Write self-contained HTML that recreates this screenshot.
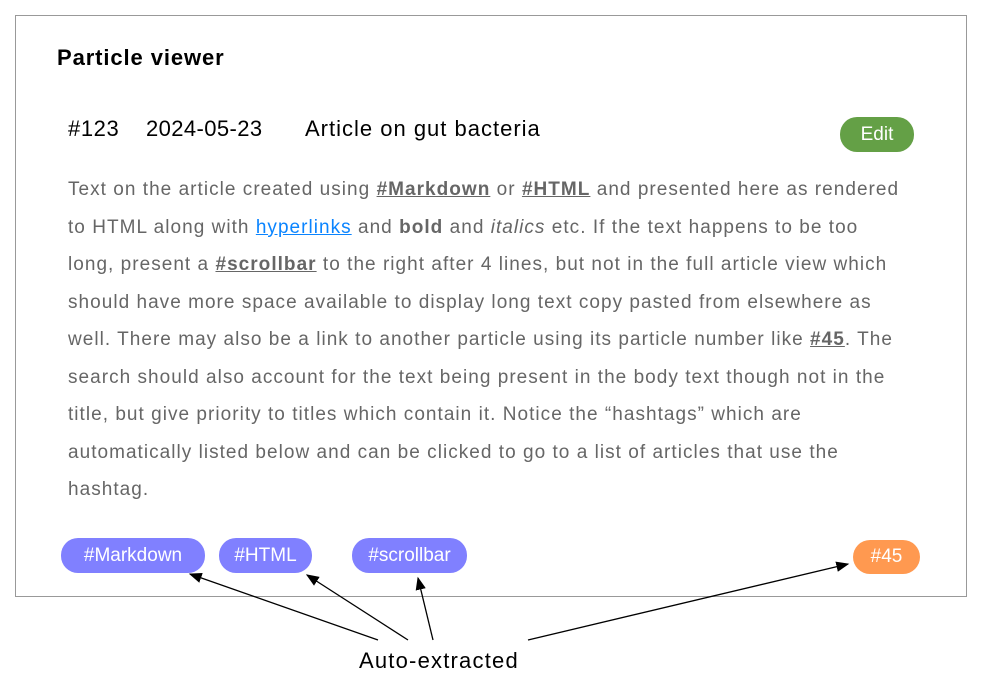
<!DOCTYPE html>
<html><head><meta charset="utf-8"><style>
body{margin:0;width:982px;height:699px;background:#fff;position:relative;font-family:"Liberation Sans",sans-serif;overflow:hidden}
.box{position:absolute;left:15px;top:15px;width:950px;height:580px;border:1px solid #999}
.t{position:absolute;white-space:nowrap}
.ln{position:absolute;left:68px;white-space:nowrap;font-size:19px;color:#666;letter-spacing:1.03px}
.ln b{color:#666}
.u{text-decoration:underline;font-weight:bold}
.pill{position:absolute;color:#fff;font-size:19px;border-radius:17px;display:flex;align-items:center;justify-content:center}
</style></head><body>
<div class="box"></div>
<div class="t" style="left:57px;top:45px;font-size:22px;font-weight:bold;letter-spacing:0.9px">Particle viewer</div>
<div class="t" style="left:68px;top:116px;font-size:22px;letter-spacing:0.6px">#123</div>
<div class="t" style="left:146px;top:116px;font-size:22px;letter-spacing:0.4px">2024-05-23</div>
<div class="t" style="left:305px;top:116px;font-size:22px;letter-spacing:1px">Article on gut bacteria</div>
<div class="pill" style="left:840px;top:117px;width:74px;height:35px;background:#64a046">Edit</div>
<div class="ln" style="top:179px">Text on the article created using <span class="u">#Markdown</span> or <span class="u">#HTML</span> and presented here as rendered</div>
<div class="ln" style="top:217px">to HTML along with <span style="color:#0a84ff;text-decoration:underline">hyperlinks</span> and <b>bold</b> and <i>italics</i> etc. If the text happens to be too</div>
<div class="ln" style="top:254px">long, present a <span class="u">#scrollbar</span> to the right after 4 lines, but not in the full article view which</div>
<div class="ln" style="top:292px">should have more space available to display long text copy pasted from elsewhere as</div>
<div class="ln" style="top:329px">well. There may also be a link to another particle using its particle number like <span class="u">#45</span>. The</div>
<div class="ln" style="top:367px">search should also account for the text being present in the body text though not in the</div>
<div class="ln" style="top:404px">title, but give priority to titles which contain it. Notice the “hashtags” which are</div>
<div class="ln" style="top:442px">automatically listed below and can be clicked to go to a list of articles that use the</div>
<div class="ln" style="top:479px">hashtag.</div>
<div class="pill" style="left:61px;top:538px;width:144px;height:35px;background:#8080ff">#Markdown</div>
<div class="pill" style="left:219px;top:538px;width:93px;height:35px;background:#8080ff">#HTML</div>
<div class="pill" style="left:352px;top:538px;width:115px;height:35px;background:#8080ff">#scrollbar</div>
<div class="pill" style="left:853px;top:540px;width:67px;height:34px;background:#ff9950">#45</div>
<svg style="position:absolute;left:0;top:0" width="982" height="699">
<defs><marker id="a" markerWidth="10" markerHeight="8" refX="9" refY="4" orient="auto"><path d="M0,0L10,4L0,8z" fill="#000"/></marker></defs>
<g stroke="#000" stroke-width="1.3" marker-end="url(#a)">
<line x1="378" y1="640" x2="190" y2="574"/>
<line x1="408" y1="640" x2="307" y2="575"/>
<line x1="433" y1="640" x2="418" y2="578"/>
<line x1="528" y1="640" x2="848" y2="564"/>
</g></svg>
<div class="t" style="left:359px;top:648px;font-size:22px;letter-spacing:1.2px">Auto-extracted</div>
</body></html>
